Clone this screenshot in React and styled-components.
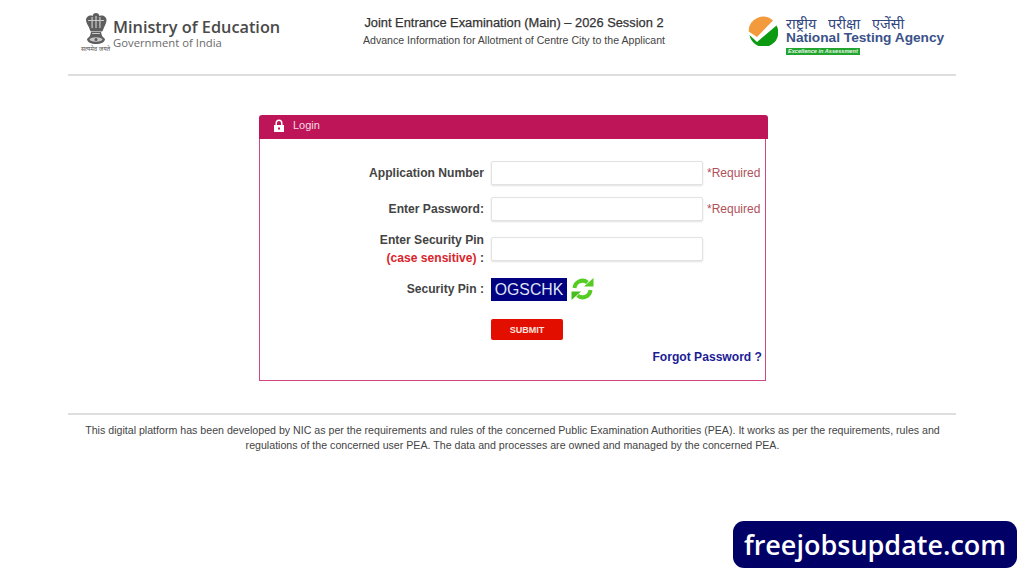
import styled, { createGlobalStyle } from 'styled-components';

const GlobalStyle = createGlobalStyle`
  html, body {
    margin: 0;
    padding: 0;
    background: #fff;
    font-family: "Liberation Sans", Arial, sans-serif;
  }
`;

const Page = styled.div`
  width: 888px;
  height: 576px;
  margin: 0 auto 0 68px;
  display: flex;
  flex-direction: column;
  overflow: hidden;
`;

const Header = styled.header`
  height: 74px;
  border-bottom: 2px solid #dedede;
  display: grid;
  grid-template-columns: 280px 322px 1fr;
`;

const MinistryBrand = styled.div`
  display: flex;
  align-items: flex-start;
  padding: 13px 0 0 13px;
  gap: 3px;
`;

const EmblemBox = styled.div`
  width: 29px;
  display: flex;
  flex-direction: column;
  align-items: center;
  gap: 1px;
`;

const EmblemMotto = styled.span`
  font-family: "Noto Sans", "Liberation Sans", sans-serif;
  font-size: 6px;
  line-height: 7px;
  color: #555;
  white-space: nowrap;
`;

const MinistryText = styled.div`
  display: flex;
  flex-direction: column;
  padding-top: 4px;
  font-family: "Open Sans", sans-serif;
`;

const MinistryName = styled.span`
  font-size: 16.3px;
  line-height: 20px;
  font-weight: 600;
  color: #4a4a4a;
  white-space: nowrap;
`;

const MinistrySub = styled.span`
  font-size: 11.3px;
  line-height: 12px;
  color: #6a6a6a;
  white-space: nowrap;
`;

const ExamTitle = styled.div`
  padding-top: 14px;
  margin-left: 10px;
  width: 312px;
  display: flex;
  flex-direction: column;
  align-items: center;
`;

const ExamName = styled.div`
  font-size: 12.85px;
  line-height: 17px;
  color: #333;
  -webkit-text-stroke: 0.25px #333;
  white-space: nowrap;
`;

const ExamSub = styled.div`
  font-size: 10.6px;
  line-height: 14px;
  margin-top: 2px;
  color: #444;
  white-space: nowrap;
`;

const NtaBrand = styled.div`
  display: flex;
  align-items: flex-start;
  padding: 16px 0 0 78px;
  gap: 8px;
`;

const NtaText = styled.div`
  display: flex;
  flex-direction: column;
`;

const NtaHindi = styled.span`
  font-family: "Noto Sans", "Liberation Sans", sans-serif;
  font-size: 14.5px;
  line-height: 14px;
  word-spacing: 8px;
  color: #33477f;
  white-space: nowrap;
`;

const NtaName = styled.span`
  font-size: 13.7px;
  line-height: 16px;
  font-weight: 700;
  color: #3a5288;
  white-space: nowrap;
`;

const NtaTag = styled.span`
  align-self: flex-start;
  margin-top: 2px;
  padding: 0 2px;
  background: #22a52f;
  color: #e6f5e6;
  font-size: 5.6px;
  line-height: 7px;
  font-style: italic;
  font-weight: 700;
  white-space: nowrap;
`;

const LoginPanel = styled.section`
  width: 509px;
  margin: 39px 0 0 191px;
`;

const PanelHead = styled.div`
  height: 24px;
  background: #be1558;
  border-radius: 3px 3px 0 0;
  display: flex;
  align-items: center;
  gap: 8px;
  padding: 0 0 4px 14px;
  box-sizing: border-box;
  color: #f3dbe5;
  font-size: 11px;
`;

const PanelBody = styled.div`
  width: 507px;
  height: 242px;
  box-sizing: border-box;
  border: 1px solid #d0487f;
  border-top: 0;
  padding-top: 22px;
  display: flex;
  flex-direction: column;
`;

const FieldRow = styled.div`
  display: grid;
  grid-template-columns: 224px 212px 1fr;
  grid-auto-rows: ${({ $h }) => $h}px;
  column-gap: 7px;
  align-items: center;
  margin-bottom: ${({ $gap }) => $gap}px;
`;

const Label = styled.label`
  text-align: right;
  font-size: 12.1px;
  line-height: 18px;
  font-weight: 700;
  color: #444;
`;

const CaseNote = styled.span`
  color: #d8262c;
`;

const TextInput = styled.input`
  width: 212px;
  height: 24px;
  box-sizing: border-box;
  border: 1px solid #e2e2e2;
  border-radius: 2px;
  background: #fff;
  box-shadow: 0 1px 2px rgba(0, 0, 0, 0.12);
  outline: 0;
`;

const Required = styled.span`
  font-size: 12px;
  color: #b0505a;
  margin-left: -3px;
  white-space: nowrap;
`;

const CaptchaCell = styled.div`
  display: flex;
  align-items: center;
  gap: 3px;
`;

const Captcha = styled.div`
  width: 76px;
  height: 23px;
  background: #000080;
  color: #dfe3f5;
  font-size: 15.8px;
  line-height: 23px;
  text-align: center;
`;

const SubmitButton = styled.button`
  width: 72px;
  height: 21px;
  padding: 0;
  border: 0;
  border-radius: 2px;
  background: #e20f00;
  color: #fbe3de;
  font-family: inherit;
  font-size: 9px;
  font-weight: 700;
`;

const ForgotRow = styled.div`
  text-align: right;
  padding-right: 3px;
  font-size: 12.1px;
  line-height: 14px;
  font-weight: 700;
  color: #1c1c96;
`;

const Footer = styled.footer`
  margin-top: 32px;
  border-top: 2px solid #dedede;
  padding: 8px 0 0 1px;
  text-align: center;
  font-size: 10.64px;
  line-height: 15px;
  color: #444;
`;

const BadgeLink = styled.div`
  position: fixed;
  left: 733px;
  top: 521px;
  width: 284px;
  height: 47px;
  border-radius: 11px;
  background: #000066;
  color: #fff;
  font-family: "Open Sans", sans-serif;
  font-size: 27px;
  font-weight: 600;
  line-height: 47px;
  text-align: center;
`;

const Emblem = () => (
  <svg width="24" height="32" viewBox="0 0 24 32">
    <g fill="#5e5e5e">
      <path d="M12 0c2 0 3 1 3.500 3 3-1.500 7 .5 7 4 0 3-1.500 5-2.500 7.500-1 2-1 3.500-2 4H7c-1-.5-1-2-2-4C4 12 2 10 2 7c0-3.500 4-5.500 6.500-4C9 1 10 0 12 0z" />
      <path d="M7 19h10l1 4H6z" />
      <path d="M7 22h10l4 4c0 3-4 5-9 5s-9-2-9-5z" />
    </g>
    <g fill="#c9c9c9">
      <rect x="7.500" y="4" width="1.200" height="11" />
      <rect x="11.400" y="3" width="1.200" height="12" />
      <rect x="15.300" y="4" width="1.200" height="11" />
      <rect x="4" y="7" width="16" height="1" />
      <rect x="8" y="20" width="8" height="1" />
      <ellipse cx="12" cy="26.500" rx="6.500" ry="2.200" />
    </g>
    <circle cx="12" cy="26.500" r="1.500" fill="#5e5e5e" />
  </svg>
);

const NtaLogo = () => (
  <svg width="30" height="30" viewBox="0 0 30 30">
    <path d="M.7 15.500A14.500 14.500 0 0 1 25 4.500L9 21z" fill="#f39a3c" />
    <path d="M1.500 19L9 26 28.500 9.500A14.500 14.500 0 1 1 1.500 19z" fill="#0b9a12" />
  </svg>
);

const RefreshIcon = () => (
  <svg width="25" height="24" viewBox="0 0 25 24">
    <g fill="none" stroke="#55cc22" strokeWidth="4">
      <path d="M4.500 11A8 8 0 0 1 17.500 5.500" />
      <path d="M20.500 13A8 8 0 0 1 7.500 18.500" />
    </g>
    <path d="M14 9.500h9.500V1z" fill="#55cc22" />
    <path d="M11 14.500H1.500V23z" fill="#46bd1c" />
  </svg>
);

const LockIcon = () => (
  <svg width="12" height="13" viewBox="0 0 12 13">
    <path d="M2.500 6V4a3.500 3.500 0 0 1 7 0v2H8V4a2 2 0 0 0-4 0v2z" fill="#fff" />
    <path d="M1 6h10v7H1zM5 8.500v2h2v-2z" fill="#fff" fillRule="evenodd" />
  </svg>
);

const App = () => (
  <>
    <GlobalStyle />
    <Page>
      <Header>
        <MinistryBrand>
          <EmblemBox>
            <Emblem />
            <EmblemMotto>सत्यमेव जयते</EmblemMotto>
          </EmblemBox>
          <MinistryText>
            <MinistryName>Ministry of Education</MinistryName>
            <MinistrySub>Government of India</MinistrySub>
          </MinistryText>
        </MinistryBrand>
        <ExamTitle>
          <ExamName>Joint Entrance Examination (Main) – 2026 Session 2</ExamName>
          <ExamSub>Advance Information for Allotment of Centre City to the Applicant</ExamSub>
        </ExamTitle>
        <NtaBrand>
          <NtaLogo />
          <NtaText>
            <NtaHindi>राष्ट्रीय परीक्षा एजेंसी</NtaHindi>
            <NtaName>National Testing Agency</NtaName>
            <NtaTag>Excellence in Assessment</NtaTag>
          </NtaText>
        </NtaBrand>
      </Header>

      <LoginPanel>
        <PanelHead>
          <LockIcon />
          Login
        </PanelHead>
        <PanelBody>
          <FieldRow $h={24} $gap={12}>
            <Label>Application Number</Label>
            <TextInput />
            <Required>*Required</Required>
          </FieldRow>
          <FieldRow $h={24} $gap={16}>
            <Label>Enter Password:</Label>
            <TextInput type="password" />
            <Required>*Required</Required>
          </FieldRow>
          <FieldRow $h={24} $gap={16}>
            <Label>
              Enter Security Pin
              <br />
              <CaseNote>(case sensitive)</CaseNote> :
            </Label>
            <TextInput />
          </FieldRow>
          <FieldRow $h={24} $gap={18}>
            <Label>Security Pin :</Label>
            <CaptchaCell>
              <Captcha>OGSCHK</Captcha>
              <RefreshIcon />
            </CaptchaCell>
          </FieldRow>
          <FieldRow $h={21} $gap={10}>
            <span />
            <SubmitButton>SUBMIT</SubmitButton>
          </FieldRow>
          <ForgotRow>Forgot Password ?</ForgotRow>
        </PanelBody>
      </LoginPanel>

      <Footer>
        This digital platform has been developed by NIC as per the requirements and rules of the concerned Public Examination Authorities (PEA). It works as per the requirements, rules and
        <br />
        regulations of the concerned user PEA. The data and processes are owned and managed by the concerned PEA.
      </Footer>
    </Page>
    <BadgeLink>freejobsupdate.com</BadgeLink>
  </>
);

export default App;
